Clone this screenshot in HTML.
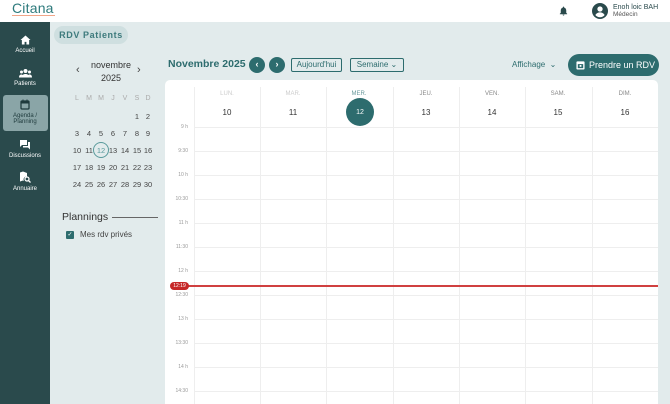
<!DOCTYPE html>
<html><head><meta charset="utf-8"><style>
*{box-sizing:border-box;margin:0;padding:0}
html{width:670px;height:404px;overflow:hidden;background:#e2ebec}
body{width:670px;height:404px;overflow:hidden;font-family:"Liberation Sans",sans-serif;background:#e2ebec;position:relative;color:#333}
.abs{position:absolute}
.hdr{left:0;top:0;width:670px;height:22px;background:#fff}
.side{left:0;top:22px;width:50px;height:382px;background:#2a4a4c}
.nav{position:absolute;left:0;width:50px;text-align:center;color:#fff;font-size:6px}
.nav svg{display:block;margin:0 auto 3px}
.card{left:165px;top:80px;width:493px;height:324px;background:#fff;border-radius:5px 5px 0 0}
.t{position:absolute;font-size:5px;color:#999;width:26px;text-align:right;left:162px}
.hl{position:absolute;left:194px;width:464px;height:1px;background:#eee}
.vl{position:absolute;top:87px;width:1px;height:317px;background:#eee}
.dn{position:absolute;font-size:6px;color:#888;width:66px;text-align:center;top:91px}
.dd{position:absolute;font-size:8px;color:#333;width:66px;text-align:center;top:108px}
.mc{position:absolute;font-size:7.5px;color:#444;width:12px;text-align:center}
.btn{position:absolute;border:1px solid #2d6c6e;border-radius:2px;font-size:8px;color:#2d6c6e;text-align:center;line-height:12px;height:14px}
.circ{position:absolute;width:16px;height:16px;border-radius:50%;background:#2d6c6e;color:#fff;font-size:9px;text-align:center;line-height:15px;font-weight:bold}
</style></head><body>
<div class="abs hdr"></div>
<div class="abs" style="left:12px;top:0px;font-size:14px;color:#2d7a7c;letter-spacing:0.2px">Citana</div>
<div class="abs" style="left:12px;top:15px;width:43px;height:1px;background:#e86a3a;opacity:.6"></div>
<svg class="abs" style="left:558px;top:5px" width="11" height="12" viewBox="0 0 24 24"><path fill="#2a4a4c" d="M12 22a2 2 0 0 0 2-2h-4a2 2 0 0 0 2 2zm6-6V11c0-3-1.6-5.6-4.5-6.3V4a1.5 1.5 0 0 0-3 0v.7C7.6 5.4 6 8 6 11v5l-2 2v1h16v-1z"/></svg>
<svg class="abs" style="left:592px;top:3px" width="16" height="16" viewBox="0 0 24 24"><circle cx="12" cy="12" r="12" fill="#2a4a4c"/><circle cx="12" cy="9" r="4" fill="#fff"/><path d="M5 18c2-3 4-4 7-4s5 1 7 4a9 9 0 0 1-14 0z" fill="#fff"/></svg>
<div class="abs" style="left:613px;top:4px;font-size:7px;color:#2a4a4c">Enoh loic BAH</div>
<div class="abs" style="left:613px;top:11px;font-size:6.5px;color:#555">Médecin</div>

<div class="abs side"></div>
<div class="nav" style="top:35px"><svg width="11" height="10" viewBox="0 0 24 22"><path fill="#fff" d="M12 1 1 11h3v10h6v-6h4v6h6V11h3z"/></svg>Accueil</div>
<div class="nav" style="top:68px"><svg width="13" height="10" viewBox="0 0 26 18"><circle cx="13" cy="5" r="4" fill="#fff"/><circle cx="5" cy="7" r="3" fill="#fff"/><circle cx="21" cy="7" r="3" fill="#fff"/><path fill="#fff" d="M5 18c0-5 4-7 8-7s8 2 8 7zM0 18c0-4 2-6 5-6 1 0 1 0 2 1-2 2-2 3-2 5zM26 18c0-4-2-6-5-6-1 0-1 0-2 1 2 2 2 3 2 5z"/></svg>Patients</div>
<div class="abs" style="left:3px;top:95px;width:45px;height:36px;background:#8aa5a7;border-radius:3px"></div>
<div class="nav" style="top:99px;color:#1e3a3c;line-height:6px"><svg width="10" height="11" viewBox="0 0 20 22"><rect x="2" y="4" width="16" height="16" rx="2" fill="none" stroke="#1e3a3c" stroke-width="2.5"/><rect x="2" y="4" width="16" height="5" fill="#1e3a3c"/><rect x="5" y="1" width="2" height="4" fill="#1e3a3c"/><rect x="13" y="1" width="2" height="4" fill="#1e3a3c"/></svg>Agenda /<br>Planning</div>
<div class="nav" style="top:139px"><svg width="12" height="11" viewBox="0 0 24 22"><path fill="#fff" d="M2 2h14v10H6l-4 4zM18 6h4v15l-4-4H8v-3h10z"/></svg>Discussions</div>
<div class="nav" style="top:171px"><svg width="12" height="12" viewBox="0 0 24 24"><path fill="#fff" d="M2 3l6-2 8 3v7a6 6 0 0 0-6 9l-2-1-6 2z"/><circle cx="16" cy="16" r="4" fill="none" stroke="#fff" stroke-width="2.5"/><path d="M19 19l4 4" stroke="#fff" stroke-width="2.5"/></svg>Annuaire</div>

<div class="abs" style="left:54px;top:26px;width:74px;height:18px;background:#cfdfe0;border-radius:9px;font-size:9px;color:#3d7a7c;line-height:18px;text-align:center;letter-spacing:.6px;font-weight:bold">RDV Patients</div>

<div class="abs" style="left:76px;top:64px;font-size:11px;color:#444">‹</div>
<div class="abs" style="left:137px;top:64px;font-size:11px;color:#444">›</div>
<div class="abs" style="left:86px;top:59px;width:50px;text-align:center;font-size:9px;color:#333;line-height:13px">novembre<br>2025</div>
<div class="mc" style="left:71px;top:95px;color:#aaa;font-size:7px">L</div><div class="mc" style="left:83px;top:95px;color:#aaa;font-size:7px">M</div><div class="mc" style="left:95px;top:95px;color:#aaa;font-size:7px">M</div><div class="mc" style="left:107px;top:95px;color:#aaa;font-size:7px">J</div><div class="mc" style="left:119px;top:95px;color:#aaa;font-size:7px">V</div><div class="mc" style="left:131px;top:95px;color:#aaa;font-size:7px">S</div><div class="mc" style="left:142px;top:95px;color:#aaa;font-size:7px">D</div>
<div class="mc" style="left:131px;top:112px">1</div><div class="mc" style="left:142px;top:112px">2</div>
<div class="mc" style="left:71px;top:129px">3</div><div class="mc" style="left:83px;top:129px">4</div><div class="mc" style="left:95px;top:129px">5</div><div class="mc" style="left:107px;top:129px">6</div><div class="mc" style="left:119px;top:129px">7</div><div class="mc" style="left:131px;top:129px">8</div><div class="mc" style="left:142px;top:129px">9</div>
<div class="mc" style="left:71px;top:146px">10</div><div class="mc" style="left:83px;top:146px">11</div><div class="abs" style="left:93px;top:142px;width:16px;height:16px;border:1px solid #5a9a9c;border-radius:50%"></div><div class="mc" style="left:95px;top:146px;color:#5a9a9c">12</div><div class="mc" style="left:107px;top:146px">13</div><div class="mc" style="left:119px;top:146px">14</div><div class="mc" style="left:131px;top:146px">15</div><div class="mc" style="left:142px;top:146px">16</div>
<div class="mc" style="left:71px;top:163px">17</div><div class="mc" style="left:83px;top:163px">18</div><div class="mc" style="left:95px;top:163px">19</div><div class="mc" style="left:107px;top:163px">20</div><div class="mc" style="left:119px;top:163px">21</div><div class="mc" style="left:131px;top:163px">22</div><div class="mc" style="left:142px;top:163px">23</div>
<div class="mc" style="left:71px;top:180px">24</div><div class="mc" style="left:83px;top:180px">25</div><div class="mc" style="left:95px;top:180px">26</div><div class="mc" style="left:107px;top:180px">27</div><div class="mc" style="left:119px;top:180px">28</div><div class="mc" style="left:131px;top:180px">29</div><div class="mc" style="left:142px;top:180px">30</div>

<div class="abs" style="left:62px;top:211px;font-size:10.5px;color:#333">Plannings</div>
<div class="abs" style="left:112px;top:217px;width:46px;height:1px;background:#666"></div>
<div class="abs" style="left:66px;top:231px;width:8px;height:8px;background:#2d6c6e;border-radius:1px;color:#fff;font-size:6px;line-height:8px;text-align:center">✓</div>
<div class="abs" style="left:80px;top:230px;font-size:8px;color:#444">Mes rdv privés</div>

<div class="abs" style="left:168px;top:58px;font-size:10.5px;color:#2d6c6e;font-weight:bold">Novembre 2025</div>
<div class="circ" style="left:249px;top:57px">‹</div>
<div class="circ" style="left:269px;top:57px">›</div>
<div class="btn" style="left:291px;top:58px;width:51px">Aujourd'hui</div>
<div class="btn" style="left:350px;top:58px;width:54px">Semaine ⌄</div>
<div class="abs" style="left:512px;top:60px;font-size:8px;color:#2d6c6e">Affichage &nbsp;⌄</div>
<div class="abs" style="left:568px;top:54px;width:91px;height:22px;background:#2d6c6e;border-radius:11px;color:#fff;font-size:9px;line-height:22px;padding-left:21px">Prendre un RDV</div>
<svg class="abs" style="left:576px;top:60px" width="9" height="10" viewBox="0 0 20 22"><rect x="1" y="3" width="18" height="18" rx="2" fill="#fff"/><rect x="4" y="9" width="12" height="9" fill="#2d6c6e"/><rect x="8" y="11" width="4" height="4" fill="#fff"/></svg>

<div class="abs card"></div>
<div class="vl" style="left:194px"></div><div class="vl" style="left:260px"></div><div class="vl" style="left:326px"></div><div class="vl" style="left:393px"></div><div class="vl" style="left:459px"></div><div class="vl" style="left:525px"></div><div class="vl" style="left:592px"></div>
<div class="dn" style="left:194px;color:#ccc">LUN.</div><div class="dn" style="left:260px;color:#ccc">MAR.</div><div class="dn" style="left:326px;color:#6a9a9c">MER.</div><div class="dn" style="left:393px">JEU.</div><div class="dn" style="left:459px">VEN.</div><div class="dn" style="left:525px">SAM.</div><div class="dn" style="left:592px">DIM.</div>
<div class="dd" style="left:194px">10</div><div class="dd" style="left:260px">11</div>
<div class="abs" style="left:346px;top:98px;width:28px;height:28px;border-radius:50%;background:#2d6c6e"></div>
<div class="dd" style="left:327px;color:#fff;font-size:7px;top:109px">12</div>
<div class="dd" style="left:393px">13</div><div class="dd" style="left:459px">14</div><div class="dd" style="left:525px">15</div><div class="dd" style="left:592px">16</div>
<div class="hl" style="top:127px"></div>
<div class="hl" style="top:151px"></div><div class="hl" style="top:175px"></div><div class="hl" style="top:199px"></div><div class="hl" style="top:223px"></div><div class="hl" style="top:247px"></div><div class="hl" style="top:271px"></div><div class="hl" style="top:295px"></div><div class="hl" style="top:319px"></div><div class="hl" style="top:343px"></div><div class="hl" style="top:367px"></div><div class="hl" style="top:391px"></div>
<div class="t" style="top:124px">9 h</div>
<div class="t" style="top:148px">9:30</div><div class="t" style="top:172px">10 h</div><div class="t" style="top:196px">10:30</div><div class="t" style="top:220px">11 h</div><div class="t" style="top:244px">11:30</div><div class="t" style="top:268px">12 h</div><div class="t" style="top:292px">12:30</div><div class="t" style="top:316px">13 h</div><div class="t" style="top:340px">13:30</div><div class="t" style="top:364px">14 h</div><div class="t" style="top:388px">14:30</div>
<div class="abs" style="left:185px;top:285px;width:473px;height:2px;background:#d04040"></div>
<div class="abs" style="left:170px;top:282px;width:19px;height:8px;border-radius:4px;background:#c62828;color:#fff;font-size:5px;line-height:8px;text-align:center">12:19</div>
</body></html>
